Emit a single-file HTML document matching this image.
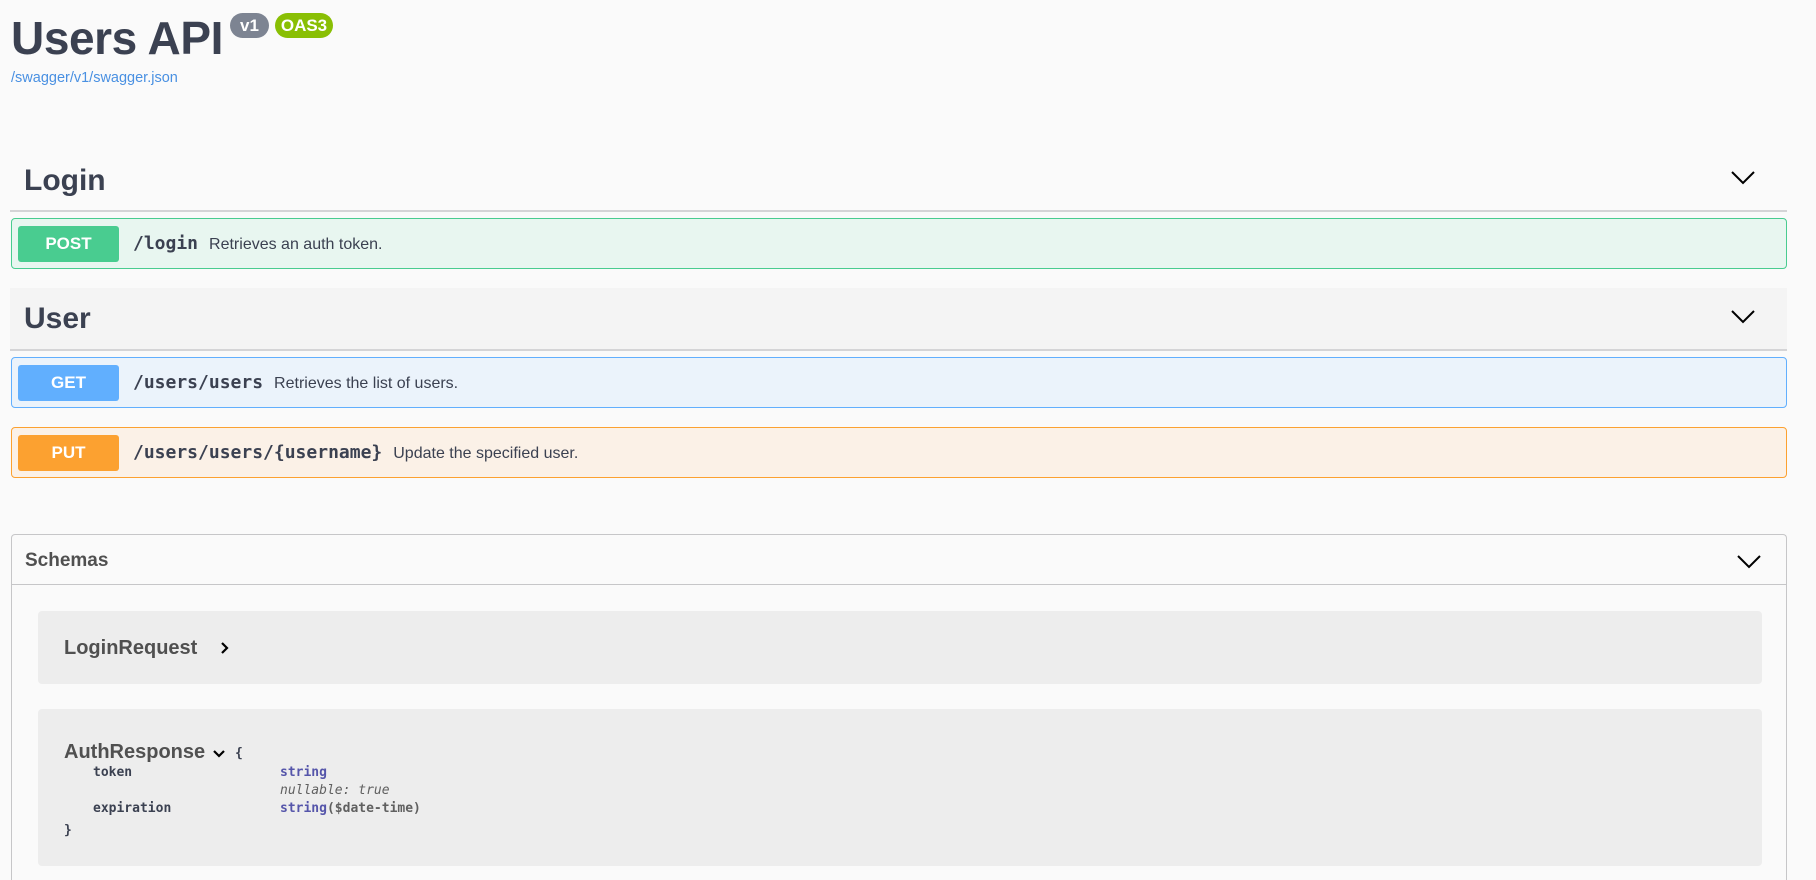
<!DOCTYPE html>
<html><head><meta charset="utf-8"><style>
*{box-sizing:border-box;margin:0;padding:0}
html,body{width:1816px;height:880px;overflow:hidden}
body{background:#fafafa;font-family:"Liberation Sans",sans-serif;color:#3b4151;position:relative}
.a{position:absolute}
.title{left:11px;top:11px;font-size:46px;font-weight:bold;color:#3b4151;letter-spacing:-0.4px}
.badge{border-radius:14px;color:#fff;font-weight:bold;font-size:17px;height:25px;line-height:25px;text-align:center}
.link{left:11px;top:70px;font-size:14.5px;color:#4990e2}
.h{font-size:30px;font-weight:bold;color:#3b4151}
.line{height:2px;background:#d4d4d6}
.op{left:11px;width:1776px;height:51px;border:1px solid;border-radius:4px}
.btn{position:absolute;left:6px;top:7px;width:101px;height:36px;border-radius:3px;color:#fff;font-weight:bold;font-size:17px;text-align:center;line-height:36px}
.path{position:absolute;left:121px;top:0;line-height:50px;font-family:"DejaVu Sans Mono","Liberation Mono",monospace;font-weight:bold;font-size:18px;color:#3b4151}
.path span{font-family:"Liberation Sans",sans-serif;font-weight:normal;font-size:16px;margin-left:11px}
.chev{position:absolute}
.mono{font-family:"DejaVu Sans Mono","Liberation Mono",monospace;font-size:13px}
</style></head><body>
<div class="a title">Users API</div>
<div class="a badge" style="left:230px;top:13px;width:39px;background:#7d8492">v1</div>
<div class="a badge" style="left:275px;top:13px;width:58px;background:#89bf04">OAS3</div>
<div class="a link">/swagger/v1/swagger.json</div>

<div class="a h" style="left:24px;top:164px">Login</div>
<svg class="chev" style="left:1730px;top:168px" width="26" height="18"><path d="M2 4 L13 15 L24 4" fill="none" stroke="#000" stroke-width="2"/></svg>
<div class="a line" style="left:10px;top:210px;width:1777px"></div>
<div class="a op" style="top:218px;background:#e8f6f0;border-color:#49cc90">
<div class="btn" style="background:#49cc90">POST</div>
<div class="path">/login<span>Retrieves an auth token.</span></div></div>

<div class="a" style="left:10px;top:288px;width:1777px;height:62px;background:#f4f4f4"></div>
<div class="a h" style="left:24px;top:302px">User</div>
<svg class="chev" style="left:1730px;top:307px" width="26" height="18"><path d="M2 4 L13 15 L24 4" fill="none" stroke="#000" stroke-width="2"/></svg>
<div class="a line" style="left:10px;top:349px;width:1777px"></div>
<div class="a op" style="top:357px;background:#ebf3fb;border-color:#61affe">
<div class="btn" style="background:#61affe">GET</div>
<div class="path">/users/users<span>Retrieves the list of users.</span></div></div>
<div class="a op" style="top:427px;background:#fbf1e7;border-color:#fca130">
<div class="btn" style="background:#fca130">PUT</div>
<div class="path">/users/users/{username}<span>Update the specified user.</span></div></div>

<div class="a" style="left:11px;top:534px;width:1776px;height:346px;border:1px solid #c6c6c8;border-bottom:none;border-radius:4px 4px 0 0"></div>
<div class="a" style="left:11px;top:584px;width:1776px;height:1px;background:#c6c6c8"></div>
<div class="a" style="left:25px;top:550px;font-size:19px;font-weight:bold;color:#505050">Schemas</div>
<svg class="chev" style="left:1736px;top:552px" width="26" height="18"><path d="M2 4 L13 15 L24 4" fill="none" stroke="#000" stroke-width="2"/></svg>

<div class="a" style="left:38px;top:611px;width:1724px;height:73px;background:#ededed;border-radius:4px"></div>
<div class="a" style="left:64px;top:637px;font-size:20px;font-weight:bold;color:#505050">LoginRequest</div>
<svg class="a" style="left:219px;top:641px" width="12" height="14"><path d="M3 2 L8 7 L3 12" fill="none" stroke="#000" stroke-width="2.2"/></svg>

<div class="a" style="left:38px;top:709px;width:1724px;height:157px;background:#ededed;border-radius:4px"></div>
<div class="a" style="left:64px;top:741px;font-size:20px;font-weight:bold;color:#505050">AuthResponse</div>
<svg class="a" style="left:212px;top:748px" width="14" height="12"><path d="M2 3 L7 8 L12 3" fill="none" stroke="#000" stroke-width="2.2"/></svg>
<div class="a mono" style="left:235px;top:746px;font-weight:bold;color:#3b4151">{</div>
<div class="a mono" style="left:93px;top:765px;font-weight:bold;color:#3b4151">token</div>
<div class="a mono" style="left:280px;top:765px;font-weight:bold;color:#55a">string</div>
<div class="a mono" style="left:280px;top:783px;font-style:italic;color:#606060">nullable: true</div>
<div class="a mono" style="left:93px;top:801px;font-weight:bold;color:#3b4151">expiration</div>
<div class="a mono" style="left:280px;top:801px;font-weight:bold;color:#55a">string<span style="color:#606060">($date-time)</span></div>
<div class="a mono" style="left:64px;top:823px;font-weight:bold;color:#3b4151">}</div>
</body></html>
